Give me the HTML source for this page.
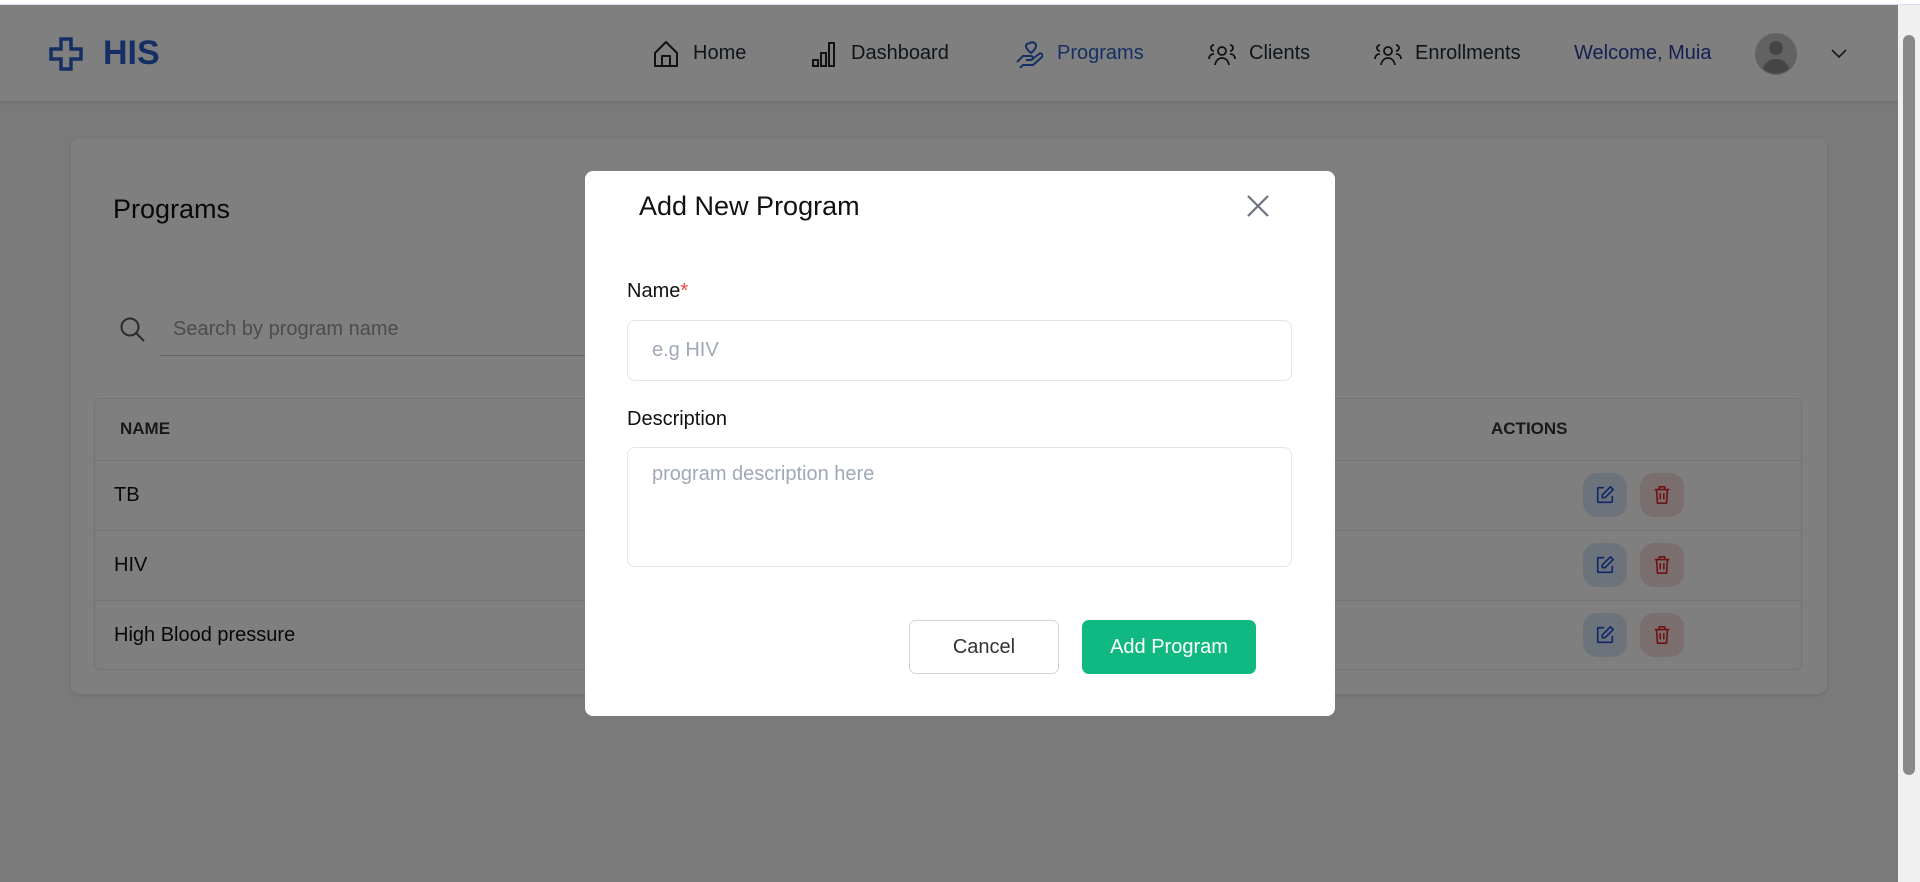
<!DOCTYPE html>
<html><head><meta charset="utf-8"><style>
*{box-sizing:border-box;margin:0;padding:0}
body{width:1920px;height:882px;overflow:hidden;background:#f4f5f7;font-family:"Liberation Sans",Arial,sans-serif;position:relative}
.top{position:absolute;left:0;top:0;width:1920px;height:5px;background:#fff;border-bottom:1px solid #dde}
.hdr{position:absolute;left:0;top:5px;width:1898px;height:97px;background:#fff;border-bottom:1px solid #ddd;box-shadow:0 1px 3px rgba(0,0,0,.1)}
.hdr .it{position:absolute;top:0;height:97px;display:flex;align-items:center;font-size:20px;color:#1f2937}
.hdr .logo{left:49px;color:#2b5fc9;font-weight:bold;font-size:34px;gap:20px}
.card{position:absolute;left:71px;top:138px;width:1756px;height:556px;background:#fff;border-radius:9px;box-shadow:0 1px 4px rgba(0,0,0,.12)}
.t{position:absolute;color:#111}
.table{position:absolute;left:94px;top:398px;width:1708px;height:272px;border:1px solid #e5e7eb;border-radius:6px}
.row{position:absolute;left:0;width:100%;border-top:1px solid #e5e7eb}
.btn{position:absolute;width:44px;height:44px;border-radius:14px;display:flex;align-items:center;justify-content:center}
.ov{position:absolute;left:0;top:5px;width:1898px;height:877px;background:rgba(0,0,0,.5)}
.sb{position:absolute;right:0;top:5px;width:22px;height:877px;background:#f0f0f0}
.modal{position:absolute;left:585px;top:171px;width:750px;height:545px;background:#fff;border-radius:8px}
.inp{position:absolute;left:42px;width:665px;border:1px solid #e3e5e8;border-radius:8px;color:#a0a8b8;font-size:20px;padding-left:24px}
</style></head><body>
<div class="top"></div>
<div class="hdr">
 <div class="it logo"><svg width="34" height="34" viewBox="0 0 34 34"><path d="M12 2h10v10h10v10H22v10H12V22H2V12h10z" fill="none" stroke="#2b5fc9" stroke-width="3.5"/></svg><span>HIS</span></div>
 <div class="it" style="left:653px;gap:14px"><svg width="26" height="28" viewBox="0 0 26 28"><path d="M2 13L13 2l11 11v13H2z M9 26V16h8v10" fill="none" stroke="#222" stroke-width="2" stroke-linejoin="round"/></svg>Home</div>
 <div class="it" style="left:811px;gap:14px"><svg width="26" height="28" viewBox="0 0 26 28"><path d="M2 20h5v6H2zM10 13h5v13h-5zM18 3h5v23h-5z" fill="none" stroke="#222" stroke-width="2"/></svg>Dashboard</div>
 <div class="it" style="left:1015px;gap:14px;color:#2b5fc9"><svg width="28" height="28" viewBox="0 0 28 28"><path d="M2 22l6-6h8a2 2 0 010 4h-5m5 0l8-6a2 2 0 013 3l-9 8H8l-3 3M14 4c2-3 7-2 7 2 0 3-5 7-5 7s-5-4-5-7c0-2 2-3 3-2" fill="none" stroke="#2b5fc9" stroke-width="2" stroke-linejoin="round"/></svg>Programs</div>
 <div class="it" style="left:1207px;gap:12px"><svg width="30" height="26" viewBox="0 0 30 26"><circle cx="15" cy="10" r="4" fill="none" stroke="#222" stroke-width="1.8"/><path d="M8 24c1-5 4-7 7-7s6 2 7 7M7 10a3 3 0 110-6M2 18c0-3 2-5 5-5M23 10a3 3 0 100-6M28 18c0-3-2-5-5-5" fill="none" stroke="#222" stroke-width="1.8"/></svg>Clients</div>
 <div class="it" style="left:1373px;gap:12px"><svg width="30" height="26" viewBox="0 0 30 26"><circle cx="15" cy="10" r="4" fill="none" stroke="#222" stroke-width="1.8"/><path d="M8 24c1-5 4-7 7-7s6 2 7 7M7 10a3 3 0 110-6M2 18c0-3 2-5 5-5M23 10a3 3 0 100-6M28 18c0-3-2-5-5-5" fill="none" stroke="#222" stroke-width="1.8"/></svg>Enrollments</div>
 <div class="it" style="left:1574px;color:#2a3fa8">Welcome, Muia</div>
 <div class="it" style="left:1755px"><svg width="42" height="42" viewBox="0 0 42 42"><circle cx="21" cy="21" r="21" fill="#c4c4c4"/><circle cx="21" cy="15" r="7" fill="#8a8a8a"/><path d="M8 36c2-8 8-10 13-10s11 2 13 10a21 21 0 01-26 0z" fill="#8a8a8a"/></svg></div>
 <div class="it" style="left:1831px"><svg width="16" height="10" viewBox="0 0 16 10"><path d="M1 1l7 7 7-7" fill="none" stroke="#333" stroke-width="1.6"/></svg></div>
</div>
<div class="card"></div>
<div class="t" style="left:113px;top:194px;font-size:27px">Programs</div>
<svg style="position:absolute;left:119px;top:316px" width="28" height="28" viewBox="0 0 28 28"><circle cx="11" cy="11" r="8.5" fill="none" stroke="#555" stroke-width="2"/><path d="M17.5 17.5L25 25" stroke="#555" stroke-width="2"/></svg>
<div class="t" style="left:173px;top:318px;font-size:20px;color:#999">Search by program name</div>
<div style="position:absolute;left:160px;top:355px;width:500px;height:1px;background:#ccc"></div>
<div class="table">
 <div class="t" style="left:25px;top:20px;font-size:17px;font-weight:bold;color:#333">NAME</div>
 <div class="t" style="left:1396px;top:20px;font-size:17px;font-weight:bold;color:#333">ACTIONS</div>
 <div class="row" style="top:61px;height:70px"><div class="t" style="left:19px;top:23px;font-size:20px">TB</div></div>
 <div class="row" style="top:131px;height:70px"><div class="t" style="left:19px;top:23px;font-size:20px">HIV</div></div>
 <div class="row" style="top:201px;height:70px"><div class="t" style="left:19px;top:23px;font-size:20px">High Blood pressure</div></div>
</div>
<div id="btns"></div>
<script>
var h='';[495,565,635].forEach(function(y){
h+='<div class="btn" style="left:1583px;top:'+(y-22)+'px;background:#dbe6f7"><svg width="20" height="20" viewBox="0 0 22 22"><path d="M10 3H4a1 1 0 00-1 1v14a1 1 0 001 1h14a1 1 0 001-1v-6M17 2l3 3-9 9H8v-3z" fill="none" stroke="#1d4ed8" stroke-width="1.8" stroke-linejoin="round"/></svg></div>';
h+='<div class="btn" style="left:1640px;top:'+(y-22)+'px;background:#f7dcdc"><svg width="20" height="20" viewBox="0 0 22 22"><path d="M3 5h16M8 5V2h6v3M5 5l1 15h10l1-15M9 9v7M13 9v7" fill="none" stroke="#dc2626" stroke-width="1.8" stroke-linejoin="round"/></svg></div>';});
document.getElementById('btns').innerHTML=h;
</script>
<div class="ov"></div>
<div class="sb"><div style="position:absolute;left:5px;top:30px;width:12px;height:740px;background:#888;border-radius:6px"></div></div>
<div class="modal">
 <div class="t" style="left:54px;top:20px;font-size:27px;color:#111">Add New Program</div>
 <svg style="position:absolute;left:661px;top:23px" width="24" height="24" viewBox="0 0 24 24"><path d="M2 2l20 20M22 2L2 22" stroke="#6b7280" stroke-width="2.2"/></svg>
 <div class="t" style="left:42px;top:109px;font-size:20px">Name<span style="color:#ef4444">*</span></div>
 <div class="inp" style="top:149px;height:61px;line-height:59px">e.g HIV</div>
 <div class="t" style="left:42px;top:237px;font-size:20px">Description</div>
 <div class="inp" style="top:276px;height:120px;padding-top:15px">program description here</div>
 <div style="position:absolute;left:324px;top:449px;width:150px;height:54px;border:1px solid #d1d5db;border-radius:7px;font-size:20px;color:#333;display:flex;align-items:center;justify-content:center">Cancel</div>
 <div style="position:absolute;left:497px;top:449px;width:174px;height:54px;background:#10b981;border-radius:7px;font-size:20px;color:#fff;display:flex;align-items:center;justify-content:center">Add Program</div>
</div>
</body></html>
